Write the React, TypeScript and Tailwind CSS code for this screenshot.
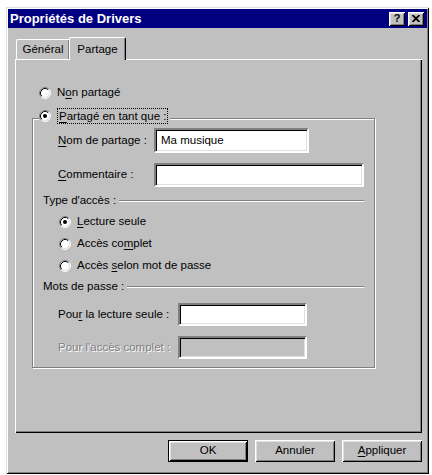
import React from "react";

function Radio({ checked }: { checked?: boolean }) {
  return (
    <svg width="12" height="12" viewBox="0 0 12 12" className="shrink-0">
      <circle cx="6" cy="6" r="5" fill="#fff" />
      <path d="M2.11 9.89 A5.5 5.5 0 0 1 9.89 2.11" stroke="#808080" fill="none" />
      <path d="M9.89 2.11 A5.5 5.5 0 0 1 2.11 9.89" stroke="#fff" fill="none" />
      <path d="M2.82 9.18 A4.5 4.5 0 0 1 9.18 2.82" stroke="#000" fill="none" />
      <path d="M9.18 2.82 A4.5 4.5 0 0 1 2.82 9.18" stroke="#dfdfdf" fill="none" />
      {checked && <circle cx="6" cy="6" r="2" fill="#000" />}
    </svg>
  );
}

const U = ({ children }: { children: React.ReactNode }) => (
  <span className="underline underline-offset-[2px]">{children}</span>
);

const fieldBase =
  "border-2 border-t-[#808080] border-l-[#808080] border-b-white border-r-white shadow-[inset_1px_1px_0_#000,inset_-1px_-1px_0_#dfdfdf] flex items-center pl-[5px] text-black";

const raised =
  "shadow-[inset_1px_1px_0_#fff,inset_-1px_-1px_0_#000,inset_2px_2px_0_#dfdfdf,inset_-2px_-2px_0_#808080]";

function EtchedLabel({ children }: { children: React.ReactNode }) {
  return (
    <div className="mt-[6px] flex h-[16px] items-center pl-[10px] pr-[10px]">
      <span className="whitespace-nowrap">{children}</span>
      <div className="ml-[3px] h-[2px] flex-1 border-t border-t-[#808080] border-b border-b-white" />
    </div>
  );
}

export default function App() {
  return (
    <div className="h-[475px] w-[432px] bg-white pl-[6px] pt-[7px] font-['Liberation_Sans',Arial,sans-serif] text-[11.5px] text-black">
      <div className="flex h-[467px] w-[423px] flex-col bg-[#c0c0c0] p-[2px] shadow-[inset_1px_1px_0_#dfdfdf,inset_-1px_-1px_0_#000,inset_2px_2px_0_#fff,inset_-2px_-2px_0_#808080]">
        {/* Title bar */}
        <div className="flex h-[19px] items-center bg-[#000080] pl-[2px] pr-[3px]">
          <span className="flex-1 text-[13px] font-bold text-white">Propriétés de Drivers</span>
          <div className={`flex h-[14px] w-[16px] items-center justify-center bg-[#c0c0c0] ${raised}`}>
            <span className="text-[11px] font-bold leading-none">?</span>
          </div>
          <div className={`ml-[3px] flex h-[14px] w-[16px] items-center justify-center bg-[#c0c0c0] ${raised}`}>
            <svg width="8" height="7" viewBox="0 0 8 7">
              <path d="M0.5 0 L7.5 7 M7.5 0 L0.5 7" stroke="#000" strokeWidth="1.8" />
            </svg>
          </div>
        </div>

        {/* Tabs */}
        <div className="mt-[9px] flex h-[22px] items-end pl-[8px]">
          <div className="flex h-[20px] w-[53px] items-center justify-center rounded-tl-[2px] border-l border-t border-white pt-[1px] shadow-[inset_-1px_0_0_#808080]">
            Général
          </div>
          <div className="relative z-10 mb-[-1px] flex h-[23px] w-[57px] items-start justify-center rounded-tl-[2px] rounded-tr-[2px] border-l border-t border-r border-l-white border-t-white border-r-black bg-[#c0c0c0] pt-[3px] shadow-[inset_-1px_0_0_#808080]">
            Partage
          </div>
        </div>

        {/* Panel */}
        <div className="ml-[7px] flex h-[374px] w-[407px] flex-col pt-[26px] shadow-[inset_1px_1px_0_#fff,inset_-1px_-1px_0_#000,inset_-2px_-2px_0_#808080]">
          <div className="flex h-[16px] items-center gap-[6px] pl-[24px]">
            <Radio />
            <span>
              N<U>o</U>n partagé
            </span>
          </div>

          <fieldset className="ml-[17px] mt-[7px] w-[343px] border border-[#808080] p-0 shadow-[inset_1px_1px_0_#fff,1px_1px_0_#fff]">
            <legend className="ml-[6px] h-[20px] bg-[#c0c0c0] p-0">
              <div className="flex h-[16px] items-center gap-[6px] pr-[2px]">
                <Radio checked />
                <span className="border border-dotted border-black px-[1px] leading-[14px]">
                  <U>P</U>artagé en tant que :
                </span>
              </div>
            </legend>

            <div className="flex flex-col pb-[8px]">
              <div className="flex h-[25px] items-center pl-[25px]">
                <span className="w-[96px]">
                  <U>N</U>om de partage :
                </span>
                <div className={`h-[25px] w-[155px] bg-white ${fieldBase}`}>Ma musique</div>
              </div>
              <div className="mt-[10px] flex h-[24px] items-center pl-[25px]">
                <span className="w-[96px]">
                  <U>C</U>ommentaire :
                </span>
                <div className={`h-[24px] w-[210px] bg-white ${fieldBase}`} />
              </div>

              <EtchedLabel>Type d'accès :</EtchedLabel>

              <div className="mt-[5px] flex h-[16px] items-center gap-[6px] pl-[26px]">
                <Radio checked />
                <span>
                  <U>L</U>ecture seule
                </span>
              </div>
              <div className="mt-[6px] flex h-[16px] items-center gap-[6px] pl-[26px]">
                <Radio />
                <span>
                  Accès co<U>m</U>plet
                </span>
              </div>
              <div className="mt-[6px] flex h-[16px] items-center gap-[6px] pl-[26px]">
                <Radio />
                <span>
                  Accès <U>s</U>elon mot de passe
                </span>
              </div>

              <div className="mt-[-1px]">
                <EtchedLabel>Mots de passe :</EtchedLabel>
              </div>

              <div className="mt-[8px] flex h-[23px] items-center pl-[25px]">
                <span className="w-[120px]">
                  Pou<U>r</U> la lecture seule :
                </span>
                <div className={`h-[23px] w-[129px] bg-white ${fieldBase}`} />
              </div>
              <div className="mt-[10px] flex h-[23px] items-center pl-[25px]">
                <span className="w-[120px] text-[#808080] [text-shadow:1px_1px_0_#fff]">
                  Pour l'accès complet :
                </span>
                <div className={`h-[23px] w-[129px] bg-[#c0c0c0] ${fieldBase}`} />
              </div>
            </div>
          </fieldset>
        </div>

        {/* Buttons */}
        <div className="mt-[7px] flex justify-end gap-[7px] pr-[5px]">
          <button className={`flex h-[22px] w-[80px] items-center justify-center border border-black bg-[#c0c0c0] ${raised}`}>
            OK
          </button>
          <button className={`flex h-[22px] w-[80px] items-center justify-center bg-[#c0c0c0] ${raised}`}>
            Annuler
          </button>
          <button className={`flex h-[22px] w-[80px] items-center justify-center bg-[#c0c0c0] ${raised}`}>
            <span>
              <U>A</U>ppliquer
            </span>
          </button>
        </div>
      </div>
    </div>
  );
}
